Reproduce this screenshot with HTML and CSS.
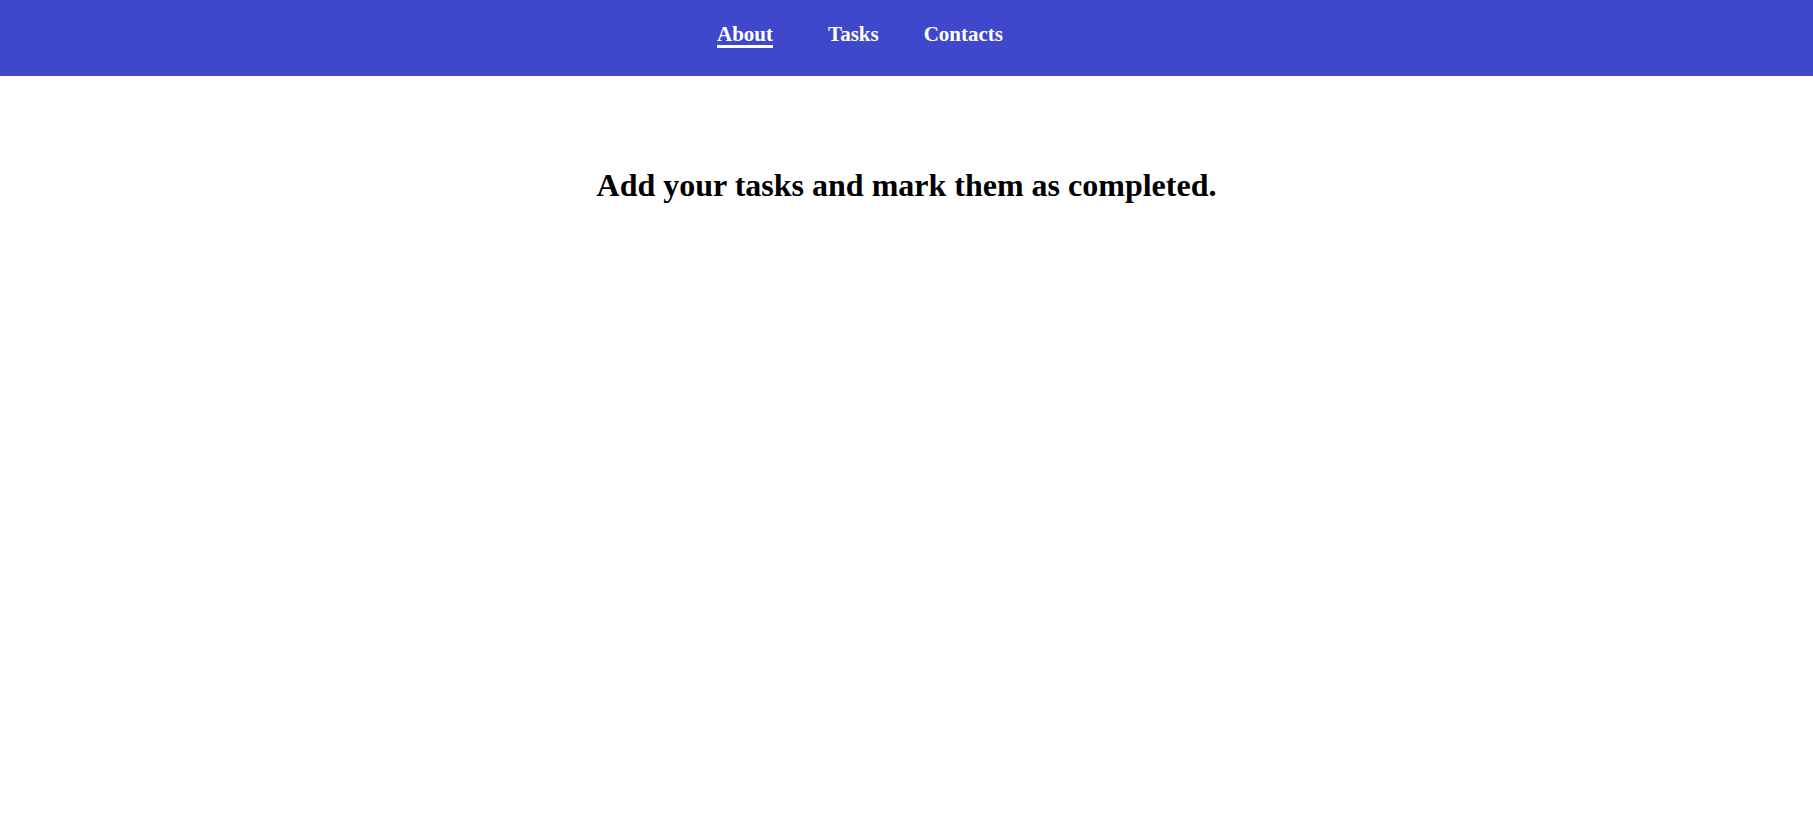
FILE: index.html
```html
<!DOCTYPE html>
<html>
<head>
<meta charset="utf-8">
<title>About</title>
<link rel="stylesheet" href="styles.css">
</head>
<body>
<nav class="topnav">
  <ul class="nav-list">
    <li><a class="nav-link active" href="#">About</a></li>
    <li><a class="nav-link" href="#">Tasks</a></li>
    <li><a class="nav-link" href="#">Contacts</a></li>
  </ul>
</nav>
<main class="content">
  <h1 class="title">Add your tasks and mark them as completed.</h1>
</main>
</body>
</html>
```
FILE: styles.css
```css
html, body {
  margin: 0;
  padding: 0;
  background: #ffffff;
  font-family: "Liberation Serif", "Times New Roman", serif;
}
.topnav {
  height: 76px;
  background: #3f48cc;
  box-sizing: border-box;
}
.nav-list {
  list-style: none;
  margin: 0;
  padding: 23px 93px 0 0;
  display: flex;
  justify-content: center;
  gap: 45px;
}
.nav-list li:first-child {
  margin-right: 10px;
}
.nav-link {
  display: block;
  color: #ffffff;
  text-decoration: none;
  font-weight: bold;
  font-size: 21px;
  line-height: 22px;
  border-bottom: 3px solid transparent;
}
.nav-link.active {
  border-bottom-color: #ffffff;
}
.content {
  padding-top: 91px;
  text-align: center;
}
.title {
  margin: 0;
  font-size: 32px;
  font-weight: bold;
  color: #000000;
}
```
